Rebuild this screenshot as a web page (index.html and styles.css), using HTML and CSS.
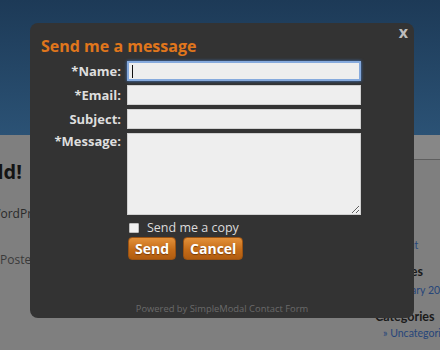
FILE: index.html
```html
<!DOCTYPE html>
<html>
<head>
<meta charset="utf-8">
<link rel="stylesheet" href="styles.css">
</head>
<body>
<div class="page">
  <header class="masthead"></header>
  <div class="body-wrap">
    <main class="main-col">
      <h2 class="post-title">Hello world!</h2>
      <p class="post-text">Welcome to WordPress. This is your first post.</p>
      <p class="post-meta">Posted in Uncategorized</p>
    </main>
    <aside class="sidebar">
      <div class="search-band"></div>
      <h3 class="side-head pages-head">Pages</h3>
      <ul class="side-list"><li>» About</li></ul>
      <h3 class="side-head">Archives</h3>
      <ul class="side-list"><li>» January 2008</li></ul>
      <h3 class="side-head">Categories</h3>
      <ul class="side-list last"><li>» Uncategorized</li></ul>
    </aside>
  </div>
</div>

<div class="modal">
  <a class="close">x</a>
  <h1 class="modal-title">Send me a message</h1>
  <form class="contact-form">
    <label class="lbl">*Name:</label>
    <span class="field focused"><input type="text" class="inp"></span>
    <label class="lbl">*Email:</label>
    <span class="field"><input type="text" class="inp"></span>
    <label class="lbl">Subject:</label>
    <span class="field"><input type="text" class="inp"></span>
    <label class="lbl lbl-top">*Message:</label>
    <span class="field field-area"><textarea class="txt"></textarea></span>
    <span></span>
    <div class="copy-row"><span class="cbox"></span><span class="copy-text">Send me a copy</span></div>
    <span></span>
    <div class="btn-row"><button type="button" class="btn">Send</button><button type="button" class="btn">Cancel</button></div>
  </form>
  <div class="powered">Powered by SimpleModal Contact Form</div>
</div>
</body>
</html>
```

FILE: styles.css
```css
html, body {
  margin: 0;
  padding: 0;
  width: 440px;
  height: 350px;
  overflow: hidden;
  background: #7f7f7f;
  font-family: "Open Sans", "DejaVu Sans", sans-serif;
}

.page {
  width: 440px;
  height: 350px;
}

.masthead {
  height: 135px;
  background: linear-gradient(#1d3a57, #2b5275);
}

.body-wrap {
  display: flex;
  height: 215px;
  overflow: hidden;
}

.main-col {
  margin-left: -98px;
  width: 300px;
  flex: none;
}

.post-title {
  margin: 25px 0 0;
  font-size: 20px;
  font-weight: bold;
  color: #141414;
  white-space: nowrap;
  line-height: 24px;
}

.post-text {
  margin: 22px 0 0 18px;
  font-size: 12px;
  line-height: 16px;
  color: #2a2a2a;
  white-space: nowrap;
}

.post-meta {
  margin: 30px 0 0 98px;
  font-size: 12px;
  line-height: 16px;
  color: #3a3a3a;
  white-space: nowrap;
}

.sidebar {
  margin-left: 173px;
  flex: none;
  width: 80px;
  display: flex;
  flex-direction: column;
  font-family: Lato, "Open Sans", sans-serif;
}

.sidebar > * {
  flex: none;
}

.search-band {
  height: 24px;
  background: #878787;
  border-bottom: 1px solid #5e5e5e;
  margin-left: -20px;
}

.side-head {
  margin: 0;
  font-size: 12.5px;
  line-height: 18px;
  font-weight: bold;
  color: #1a1a1a;
  white-space: nowrap;
}

.pages-head {
  margin-top: 58px;
}

.side-list {
  list-style: none;
  margin: 0 0 9px;
  padding: 0 0 0 8px;
  font-size: 10.5px;
  line-height: 18px;
  color: #26457a;
  white-space: nowrap;
}

.side-list.last {
  margin-top: -2px;
}

.modal {
  position: absolute;
  left: 30px;
  top: 23px;
  width: 384px;
  height: 295px;
  box-sizing: border-box;
  background: #333333;
  border-radius: 8px;
  padding: 11px 11px 0 11px;
  display: flex;
  flex-direction: column;
}

.close {
  position: absolute;
  right: 6px;
  top: -1px;
  font-size: 16px;
  font-weight: bold;
  color: #bdbdbd;
  line-height: 20px;
}

.modal-title {
  margin: 0;
  font-size: 16px;
  line-height: 24px;
  font-weight: bold;
  color: #e0761c;
}

.contact-form {
  margin-top: 3px;
  display: grid;
  grid-template-columns: 80px 234px;
  column-gap: 6px;
  row-gap: 4px;
  align-items: center;
}

.lbl {
  text-align: right;
  font-size: 13px;
  font-weight: bold;
  color: #dedede;
  line-height: 18px;
  white-space: nowrap;
}

.lbl-top {
  align-self: start;
  margin-top: -1px;
}

.field {
  position: relative;
  display: block;
  height: 20px;
}

.inp, .txt {
  display: block;
  box-sizing: border-box;
  width: 234px;
  height: 20px;
  margin: 0;
  border: 1px solid #d0d0d0;
  background: #eeeeee;
  padding: 0 3px;
  font-family: inherit;
  font-size: 13px;
  outline: none;
}

.field.focused .inp {
  border: 2px solid #86aadd;
  box-shadow: 0 0 3px #3f78c4;
}

.field.focused::after {
  content: "";
  position: absolute;
  left: 5px;
  top: 4px;
  width: 1px;
  height: 13px;
  background: #111;
}

.field-area {
  height: 82px;
}

.txt {
  height: 82px;
  resize: both;
}

.copy-row {
  display: flex;
  align-items: center;
  gap: 8px;
  margin-top: 1px;
  height: 16px;
}

.cbox {
  width: 8px;
  height: 8px;
  margin-left: 2px;
  background: #f2f2f2;
  border: 1px solid #bfbfbf;
  border-radius: 1px;
}

.copy-text {
  font-size: 12.5px;
  color: #dcdcdc;
  line-height: 16px;
}

.btn-row {
  display: flex;
  gap: 7px;
  margin-top: -3px;
}

.btn {
  margin: 0 0 0 1px;
  height: 23px;
  padding: 0 6px;
  border: 1px solid #9a5212;
  border-radius: 4px;
  background: linear-gradient(#e3913a, #c56c18 55%, #b05c10);
  color: #ffffff;
  font-family: inherit;
  font-size: 14px;
  font-weight: bold;
  line-height: 20px;
  text-shadow: 0 1px 1px #7a3c06;
}

.btn + .btn {
  margin-left: 0;
}

.powered {
  margin-top: auto;
  margin-bottom: 2px;
  text-align: center;
  font-size: 9.4px;
  line-height: 14px;
  color: #6a6a6a;
}
```
